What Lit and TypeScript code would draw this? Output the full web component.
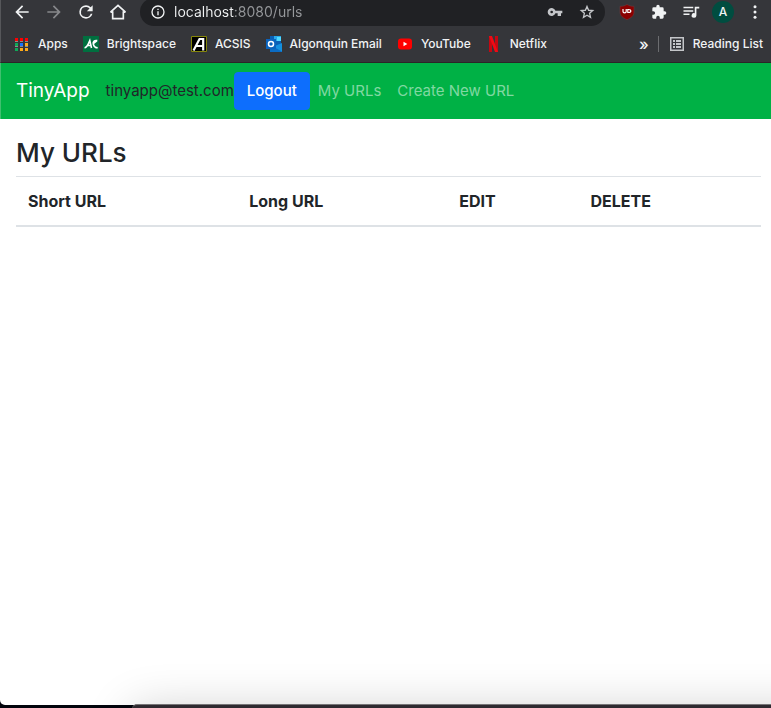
import { LitElement, html, css, svg } from "lit";
import { customElement } from "lit/decorators.js";

const icon = (body: unknown, size = 16, box = "0 0 24 24") =>
  html`<svg width=${size} height=${size} viewBox=${box} aria-hidden="true">${body}</svg>`;

const back = svg`<path fill="currentColor" d="M20 11H7.8l5.6-5.6L12 4l-8 8 8 8 1.4-1.4L7.8 13H20z"/>`;
const forward = svg`<path fill="currentColor" d="M4 11h12.2l-5.6-5.6L12 4l8 8-8 8-1.4-1.4 5.6-5.6H4z"/>`;
const reload = svg`<path fill="currentColor" d="M17.65 6.35A7.96 7.96 0 0 0 12 4a8 8 0 1 0 7.73 10h-2.08A6 6 0 1 1 12 6c1.66 0 3.14.69 4.22 1.78L13 11h7V4z"/>`;
const home = svg`<path fill="none" stroke="currentColor" stroke-width="2" stroke-linejoin="miter" d="M3 12.2 12 4l9 8.2M5.6 11v9h12.8v-9M3 12.2h2.6M21 12.2h-2.6"/>`;
const info = svg`<circle cx="12" cy="12" r="9" fill="none" stroke="currentColor" stroke-width="2"/><path fill="currentColor" d="M11 11h2v6h-2zM11 7h2v2h-2z"/>`;
const key = svg`<path fill="currentColor" d="M12.65 10A6 6 0 1 0 12.65 14H16v4h5v-4h2v-4zM7 14a2 2 0 1 1 0-4 2 2 0 0 1 0 4z"/>`;
const star = svg`<path fill="none" stroke="currentColor" stroke-width="2" d="m12 3.6 2.4 5.8 6.2.5-4.7 4.1 1.4 6.1-5.3-3.2-5.3 3.2L8.1 14 3.4 9.9l6.2-.5z"/>`;
const puzzle = svg`<path fill="currentColor" d="M20.5 11H19V7a2 2 0 0 0-2-2h-4V3.5a2.5 2.5 0 0 0-5 0V5H4a2 2 0 0 0-2 2v3.8h1.5a2.7 2.7 0 0 1 0 5.4H2V20c0 1.1.9 2 2 2h3.8v-1.5a2.7 2.7 0 0 1 5.4 0V22H17a2 2 0 0 0 2-2v-4h1.5a2.5 2.5 0 0 0 0-5z"/>`;
const queue = svg`<path fill="currentColor" d="M2 5h13v2H2zM2 9.5h13v2H2zM2 14h8v2H2zM17 5h6v2.4h-3.8V16.500a3.200 3.200 0 1 1-2.200-3z"/>`;
const dots = svg`<g fill="currentColor"><circle cx="12" cy="5" r="2"/><circle cx="12" cy="12" r="2"/><circle cx="12" cy="19" r="2"/></g>`;
const shield = svg`<path fill="#8b0000" stroke="#6b3a3e" stroke-width=".6" d="M8 .4c2 1.300 4 1.900 7 1.900V8c0 3.800-3 6-7 7.700C4 14 1 11.800 1 8V2.300C4 2.300 6 1.700 8 .4z"/><path fill="none" stroke="#fff" stroke-width="1.200" d="M4 5v2.500q0 1.400 1.600 1.400t1.600-1.400V5M8.800 5.500h.8q2.200 0 2.200 1.500T9.600 8.500h-.8z"/>`;

const apps = svg`
  <path fill="#f00" d="M1 2h3v3H1zM6 2h3v3H6zM11 2h3v3h-3z"/>
  <path fill="#8c8c8c" d="M1 5h3v1H1zM6 5h3v1H6zM11 5h3v1h-3zM1 10h3v1H1zM6 10h3v1H6zM11 10h3v1h-3z"/>
  <path fill="#0fa958" d="M1 7h3v3H1zM1 12h3v3H1z"/><path fill="#1a73ff" d="M6 7h3v3H6z"/>
  <path fill="#ffab19" d="M11 7h3v3h-3zM6 12h3v3H6zM11 12h3v3h-3z"/>`;
const brightspace = svg`<path fill="#006f3f" d="M0 0h16v16H0z"/><path fill="none" stroke="#fff" stroke-width="1.600" d="M1.500 11.800c2.500 0 3.500-3 5.300-7.300l1.700 7.500M4 9.500h4M14.300 4.600c-3.300-.6-4.500 1.400-4 3.400.6 2.500 2 3.800 4.400 3.800M10.300 7.500 14 4.600"/>`;
const acsis = svg`<path fill="#000" stroke="#85850a" d="M.5.5h15v15H.5z"/><path fill="none" stroke="#fff" stroke-width="2.200" d="M2.500 14.500 8.500 3h3.700v11.500M5.500 10h6"/>`;
const outlook = svg`
  <path fill="#0a5fb4" d="M4 0h11v10H4z"/><path fill="#28a8ea" d="M8 0h7v5H8z"/><path fill="#50d9ff" d="M11 1h4v4h-4z"/>
  <path fill="#1490df" d="m16 7v9H4v-4z"/><path fill="#0b6cc4" d="m4 9 12 6.500-.5.5H4z"/>
  <path fill="#0a63bd" d="M0 3h10v10H0z"/><circle cx="5" cy="8" r="2.500" fill="none" stroke="#fff" stroke-width="1.500"/>`;
const youtube = svg`<rect x="1" y="2.500" width="14" height="11" rx="3" fill="#f00"/><path fill="#fff" d="M6.500 5.800v4.400L10.300 8z"/>`;
const netflix = svg`<path fill="#c40812" d="M3 0h3v16H3zM9 0h3v16H9z"/><path fill="#f00a14" d="M3 0h3l6 16H9z"/>`;
const reading = svg`<path fill="none" stroke="#c4c6c9" stroke-width="1.500" d="M1.750 1.750h12.500v12.500H1.750z"/><path fill="#c4c6c9" d="M4 4h2v2H4zM7 4h5v2H7zM4 7h2v2H4zM7 7h5v2H7zM4 10h2v2H4zM7 10h5v2H7z"/>`;

const bookmarks = [
  { label: "Apps", art: apps },
  { label: "Brightspace", art: brightspace },
  { label: "ACSIS", art: acsis },
  { label: "Algonquin Email", art: outlook },
  { label: "YouTube", art: youtube },
  { label: "Netflix", art: netflix },
];

@customElement("browser-chrome")
export class BrowserChrome extends LitElement {
  static styles = css`
    :host {
      display: block;
      background: #35363a;
      color: #f1f3f4;
      border-left: 1px solid #56575a;
      border-bottom: 1px solid #2b2527;
      font: 500 12px/16px Inter, "Liberation Sans", sans-serif;
    }
    svg { display: block; flex: none; }
    button {
      appearance: none;
      border: 0;
      padding: 0;
      background: none;
      color: inherit;
      font: inherit;
      flex: none;
      width: 32px;
      height: 28px;
      display: flex;
      align-items: center;
      justify-content: center;
    }
    .toolbar {
      height: 26px;
      padding-left: 5px;
      display: flex;
      align-items: flex-end;
      overflow: hidden;
    }
    .dim { color: #87888b; }
    .omnibox {
      flex: 1;
      min-width: 0;
      height: 28px;
      margin: 0 6px;
      padding: 0 2px 0 10px;
      border-radius: 14px;
      background: #202124;
      display: flex;
      align-items: center;
      box-sizing: border-box;
    }
    .address {
      flex: 1;
      min-width: 0;
      border: 0;
      outline: 0;
      padding: 0;
      margin-left: 8px;
      font: 400 14px/20px Inter, "Liberation Sans", sans-serif;
      color: transparent;
      background: linear-gradient(90deg, #f1f3f4 61px, #96989b 61px);
      -webkit-background-clip: text;
      background-clip: text;
    }
    .soft { color: #c4c6c9; }
    .avatar {
      width: 22px;
      height: 22px;
      border-radius: 50%;
      background: #004d40;
      line-height: 22px;
      text-align: center;
    }
    .bookmarks {
      height: 36px;
      padding: 0 8px 0 13px;
      display: flex;
      align-items: center;
      gap: 15px;
      white-space: nowrap;
    }
    .bookmark {
      display: flex;
      align-items: center;
      gap: 8px;
      color: inherit;
      text-decoration: none;
    }
    .spacer { flex: 1; }
    .tail { display: flex; align-items: center; }
    .more { width: 28px; font-size: 16px; }
    .reading {
      width: auto;
      gap: 8px;
      padding-left: 10px;
    }
    .rule { width: 1px; height: 16px; background: #6c6d70; }
  `;

  render() {
    return html`
      <div class="toolbar">
        <button aria-label="Back">${icon(back, 20)}</button>
        <button class="dim" aria-label="Forward">${icon(forward, 20)}</button>
        <button aria-label="Reload">${icon(reload, 20)}</button>
        <button aria-label="Home">${icon(home, 20)}</button>
        <div class="omnibox">
          ${icon(info)}
          <input class="address" aria-label="Address" spellcheck="false" value="localhost:8080/urls" />
          <button class="soft" aria-label="Passwords">${icon(key)}</button>
          <button class="soft" aria-label="Bookmark this page">${icon(star)}</button>
        </div>
        <button aria-label="Ad blocker">${icon(shield, 16, "0 0 16 16")}</button>
        <button aria-label="Extensions">${icon(puzzle)}</button>
        <button aria-label="Media controls">${icon(queue, 18)}</button>
        <button aria-label="Profile"><span class="avatar">A</span></button>
        <button aria-label="Menu">${icon(dots, 18)}</button>
      </div>
      <nav class="bookmarks" aria-label="Bookmarks">
        ${bookmarks.map(
          (b) => html`<a class="bookmark" href="#">${icon(b.art, 16, "0 0 16 16")}${b.label}</a>`
        )}
        <span class="spacer"></span>
        <div class="tail">
          <button class="more" aria-label="More bookmarks">»</button>
          <span class="rule"></span>
          <button class="reading">${icon(reading, 16, "0 0 16 16")}Reading List</button>
        </div>
      </nav>
    `;
  }
}

@customElement("urls-page")
export class UrlsPage extends LitElement {
  static styles = css`
    :host {
      display: block;
      color: #212529;
      font: 400 16px/24px Inter, "Liberation Sans", sans-serif;
    }
    .navbar {
      display: flex;
      align-items: center;
      height: 56px;
      padding-left: 15px;
      border-left: 1px solid #3fc06f;
      background: #00b145;
      font-size: 15px;
      line-height: 26px;
      white-space: nowrap;
    }
    .brand {
      margin-right: 16px;
      color: #fff;
      font-size: 19px;
      text-decoration: none;
    }
    .logout {
      height: 38px;
      padding: 0 12px;
      border: 1px solid #0d6efd;
      border-radius: 4px;
      background: #0d6efd;
      color: #fff;
      font: inherit;
      font-weight: 500;
    }
    .link {
      padding: 0 8px;
      color: #80d8a2;
      text-decoration: none;
    }
    .content { padding: 17px 10px 0 16px; }
    h1 {
      margin: 0;
      padding-bottom: 6px;
      font-size: 26px;
      line-height: 34px;
      font-weight: 500;
    }
    table {
      width: 100%;
      table-layout: fixed;
      border-collapse: separate;
      border-spacing: 0;
    }
    th {
      box-sizing: border-box;
      padding: 12px;
      border-top: 1px solid #dee2e6;
      border-bottom: 2px solid #dee2e6;
      text-align: left;
      font-weight: 700;
    }
    .short { width: 29.7%; }
    .long { width: 28.2%; }
    .edit { width: 17.6%; }
  `;

  render() {
    return html`
      <nav class="navbar">
        <a class="brand" href="#">TinyApp</a>
        <span>tinyapp@test.com</span>
        <button class="logout">Logout</button>
        <a class="link" href="#">My URLs</a>
        <a class="link" href="#">Create New URL</a>
      </nav>
      <main class="content">
        <h1>My URLs</h1>
        <table>
          <thead>
            <tr>
              <th class="short" scope="col">Short URL</th>
              <th class="long" scope="col">Long URL</th>
              <th class="edit" scope="col">EDIT</th>
              <th scope="col">DELETE</th>
            </tr>
          </thead>
        </table>
      </main>
    `;
  }
}

@customElement("app-root")
export class AppRoot extends LitElement {
  static styles = css`
    :host {
      display: flex;
      flex-direction: column;
      position: relative;
      box-sizing: border-box;
      min-height: 100vh;
      padding-bottom: 3px;
      background: #02040c;
      overflow: hidden;
    }
    .window {
      flex: 1;
      background: #fff;
      border-bottom-left-radius: 5px;
      overflow: hidden;
    }
    .behind {
      position: absolute;
      left: 132px;
      right: -60px;
      bottom: -60px;
      height: 64px;
      box-sizing: border-box;
      border-top: 1px solid #777577;
      border-top-left-radius: 5px;
      background: #2f2a30;
      box-shadow: 0 6px 48px rgba(0, 0, 0, 0.2);
    }
  `;

  render() {
    return html`
      <div class="window">
        <browser-chrome></browser-chrome>
        <urls-page></urls-page>
      </div>
      <div class="behind"></div>
    `;
  }
}
